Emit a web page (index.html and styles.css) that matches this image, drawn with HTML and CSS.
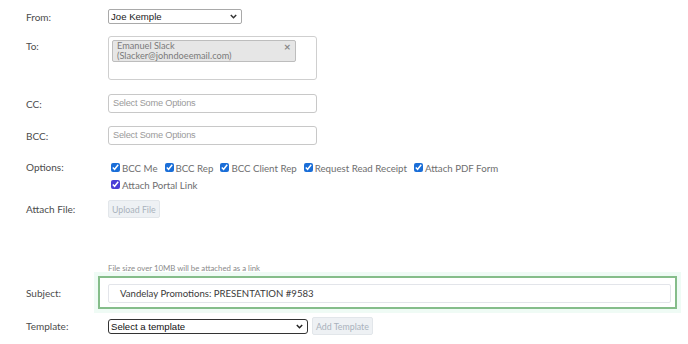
FILE: index.html
```html
<!DOCTYPE html>
<html>
<head>
<meta charset="utf-8">
<link rel="stylesheet" href="styles.css">
</head>
<body>
<div class="form">
  <div class="row row-from">
    <div class="label">From:</div>
    <span class="selwrap">
      <select class="sel sel-from"><option>Joe Kemple</option></select>
      <svg class="chev" width="7" height="5" viewBox="0 0 7 5"><path d="M0.8 1 L3.5 3.7 L6.2 1" fill="none" stroke="#333" stroke-width="1.5"/></svg>
    </span>
  </div>
  <div class="row row-to">
    <div class="label label-top">To:</div>
    <div class="multi">
      <div class="chip">
        <span class="chip-text">Emanuel Slack<br>(Slacker@johndoeemail.com)</span>
        <span class="chip-x">×</span>
      </div>
    </div>
  </div>
  <div class="row row-cc">
    <div class="label">CC:</div>
    <div class="textbox">Select Some Options</div>
  </div>
  <div class="row row-bcc">
    <div class="label">BCC:</div>
    <div class="textbox">Select Some Options</div>
  </div>
  <div class="row row-opts">
    <div class="label label-opt">Options:</div>
    <div class="opts">
      <label class="opt"><input type="checkbox" checked>BCC Me</label>
      <label class="opt"><input type="checkbox" checked>BCC Rep</label>
      <label class="opt"><input type="checkbox" checked>BCC Client Rep</label>
      <label class="opt"><input type="checkbox" checked>Request Read Receipt</label>
      <label class="opt"><input type="checkbox" checked>Attach PDF Form</label>
      <label class="opt opt-focus"><input type="checkbox" checked>Attach Portal Link</label>
    </div>
  </div>
  <div class="row row-file">
    <div class="label">Attach File:</div>
    <button class="btn">Upload File</button>
  </div>
  <div class="note">File size over 10MB will be attached as a link</div>
  <div class="row row-subject">
    <div class="label label-subject">Subject:</div>
    <div class="subject-box">
      <div class="subject-input">Vandelay Promotions: PRESENTATION #9583</div>
    </div>
  </div>
  <div class="row row-template">
    <div class="label">Template:</div>
    <span class="selwrap">
      <select class="sel sel-template"><option>Select a template</option></select>
      <svg class="chev" width="7" height="5" viewBox="0 0 7 5"><path d="M0.8 1 L3.5 3.7 L6.2 1" fill="none" stroke="#222" stroke-width="1.5"/></svg>
    </span>
    <button class="btn btn-add">Add Template</button>
  </div>
</div>
</body>
</html>
```

FILE: styles.css
```css
html, body {
  margin: 0;
  padding: 0;
  background: #ffffff;
}
body {
  font-family: Lato, "Open Sans", sans-serif;
  font-size: 10px;
  color: #555;
}
.form {
  padding: 9px 0 0 26px;
  width: 662px;
}
.row {
  display: flex;
  align-items: center;
}
.label {
  width: 82px;
  flex: none;
  color: #4c4c4c;
  font-size: 10px;
}
.row-from { height: 15px; margin-bottom: 12px; }
.selwrap {
  position: relative;
  display: flex;
}
.chev {
  position: absolute;
  right: 5px;
  top: 5px;
  pointer-events: none;
}
.sel {
  appearance: none;
  -webkit-appearance: none;
  font-family: "Liberation Sans", Arial, sans-serif;
  font-size: 9.6px;
  color: #222;
  background: #fff;
  padding: 0 0 0 2px;
  margin: 0;
  box-sizing: border-box;
  outline: none;
}
.sel-from {
  width: 134px;
  height: 15px;
  border: 1px solid #a9a9a9;
  border-radius: 2px;
}
.row-to { align-items: flex-start; margin-bottom: 14px; }
.label-top { padding-top: 4px; }
.multi {
  width: 209px;
  height: 44px;
  box-sizing: border-box;
  border: 1px solid #cfcfcf;
  border-radius: 3px;
  padding: 3px 3px;
}
.chip {
  width: 184px;
  height: 22px;
  box-sizing: border-box;
  background: #e6e6e6;
  border: 1px solid #bdbdbd;
  border-radius: 2px;
  display: flex;
  justify-content: space-between;
  padding: 0 4px;
}
.chip-text {
  font-size: 9.2px;
  line-height: 10px;
  color: #7a7a7a;
}
.chip-x {
  font-family: "DejaVu Sans", sans-serif;
  font-weight: bold;
  font-size: 9px;
  line-height: 9px;
  color: #888;
  padding-top: 2px;
}
.textbox {
  width: 209px;
  height: 19px;
  box-sizing: border-box;
  border: 1px solid #c8c8c8;
  border-radius: 3px;
  padding-left: 4px;
  line-height: 17px;
  font-family: "Liberation Sans", Arial, sans-serif;
  font-size: 9.2px;
  color: #9a9a9a;
  letter-spacing: -0.2px;
}
.row-cc { margin-bottom: 13px; }
.row-bcc { margin-bottom: 14px; }
.row-opts { align-items: flex-start; margin-bottom: 7px; }
.label-opt { line-height: 17px; }
.opts {
  width: 420px;
  display: flex;
  flex-wrap: wrap;
  column-gap: 7px;
  padding-left: 3px;
}
.opt {
  display: flex;
  align-items: center;
  height: 17px;
  color: #6e6e6e;
  font-size: 9.7px;
}
.opt input {
  width: 9px;
  height: 9px;
  margin: 0 2px 0 0;
  accent-color: #1a6ed8;
}
.opt-focus input { accent-color: #4a3fd6; }
.row-file { height: 18px; margin-bottom: 45px; }
.btn {
  font-family: Lato, "Open Sans", sans-serif;
  font-size: 8.8px;
  color: #a9b2bc;
  background: #eef1f4;
  border: 1px solid #e2e6ea;
  border-radius: 2px;
  padding: 0 3px;
  height: 18px;
  margin: 0;
}
.note {
  padding-left: 82px;
  font-size: 7.8px;
  color: #8a8a8a;
  height: 10px;
  line-height: 10px;
  margin-bottom: 3px;
}
.row-subject { margin-bottom: 8px; }
.label-subject { width: 72px; }
.subject-box {
  width: 579px;
  height: 33px;
  box-sizing: border-box;
  border: 2px solid #85bd8a;
  box-shadow: 0 0 0 4px #effbf5;
  padding: 6px 4px 0 8px;
}
.subject-input {
  height: 19px;
  box-sizing: border-box;
  border: 1px solid #e3e5ea;
  border-radius: 2px;
  padding-left: 11px;
  line-height: 17px;
  font-size: 9.6px;
  color: #3a3a3a;
}
.row-template { height: 18px; }
.sel-template {
  width: 200px;
  height: 15px;
  border: 1px solid #333;
  border-radius: 3px;
  color: #111;
}
.btn-add { margin-left: 4px; padding: 0 3px; }
```
